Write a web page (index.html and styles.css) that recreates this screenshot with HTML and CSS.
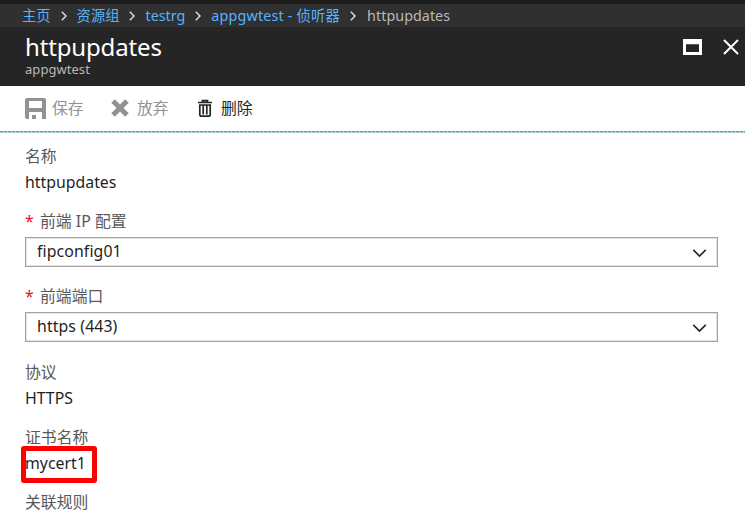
FILE: index.html
```
<!DOCTYPE html>
<html lang="zh-CN">
<head>
<meta charset="utf-8">
<title>httpupdates</title>
<link rel="stylesheet" href="styles.css">
</head>
<body>
<nav class="crumbs">
  <a class="crumb home">主页</a>
  <svg class="sep" viewBox="0 0 6 10"><path d="M.8 .8 5 5 .8 9.2"/></svg>
  <a class="crumb groups">资源组</a>
  <svg class="sep" viewBox="0 0 6 10"><path d="M.8 .8 5 5 .8 9.2"/></svg>
  <a class="crumb group">testrg</a>
  <svg class="sep" viewBox="0 0 6 10"><path d="M.8 .8 5 5 .8 9.2"/></svg>
  <a class="crumb gateway">appgwtest - 侦听器</a>
  <svg class="sep" viewBox="0 0 6 10"><path d="M.8 .8 5 5 .8 9.2"/></svg>
  <span class="crumb current">httpupdates</span>
</nav>
<header class="header">
  <div class="titles">
    <h1 class="title">httpupdates</h1>
    <div class="subtitle">appgwtest</div>
  </div>
  <div class="window-tools">
    <svg class="maximize" viewBox="0 0 19 16"><path fill-rule="evenodd" d="M0 0H19V16H0ZM3 5.2V13H16V5.2Z"/></svg>
    <svg class="close" viewBox="0 0 16 16"><path d="M1 1 15 15M15 1 1 15"/></svg>
  </div>
</header>
<div class="toolbar">
  <div class="command save">
    <svg class="icon" viewBox="0 0 21 21"><path fill-rule="evenodd" d="M2 0H19Q21 0 21 2V21H17V14H4V21H2Q0 21 0 19V2Q0 0 2 0ZM4 3V10H17V3Z"/><path d="M7 17H11V21H7Z"/></svg>
    <span>保存</span>
  </div>
  <div class="command discard">
    <svg class="icon" viewBox="0 0 18 18"><path d="M2 2 16 16M16 2 2 16"/></svg>
    <span>放弃</span>
  </div>
  <div class="command delete">
    <svg class="icon" viewBox="0 0 14 17"><path d="M4.5 1.8V.7H9.5V1.8M0 2.5H14"/><path d="M1.8 5V14.5Q1.8 16.2 3.5 16.2H10.5Q12.2 16.2 12.2 14.5V5M5.2 5.5V14.5M8.8 5.5V14.5M1 5H13"/></svg>
    <span>删除</span>
  </div>
</div>
<main class="form">
  <div class="field">
    <div class="label">名称</div>
    <div class="value name">httpupdates</div>
  </div>
  <div class="field">
    <div class="label"><span class="required">*</span>前端 IP 配置</div>
    <div class="select"><span class="config">fipconfig01</span><svg class="arrow" viewBox="0 0 16 9"><path d="M1 1 8 8 15 1"/></svg></div>
  </div>
  <div class="field">
    <div class="label"><span class="required">*</span>前端端口</div>
    <div class="select port-select"><span class="port">https (443)</span><svg class="arrow" viewBox="0 0 16 9"><path d="M1 1 8 8 15 1"/></svg></div>
  </div>
  <div class="field">
    <div class="label">协议</div>
    <div class="value protocol">HTTPS</div>
  </div>
  <div class="field">
    <div class="label">证书名称</div>
    <div class="value marked">mycert1</div>
  </div>
  <div class="field">
    <div class="label">关联规则</div>
  </div>
</main>
</body>
</html>
```

FILE: styles.css
```
*, *::after { box-sizing: border-box; }
body {
  margin: 0;
  height: 514px;
  overflow: hidden;
  background: #fff;
  color: #1f1f1f;
  font: 15.85px/26px "Noto Sans", "Noto Sans CJK SC", sans-serif;
  white-space: nowrap;
}
svg { display: block; flex: none; overflow: visible; }
.crumbs {
  display: flex;
  align-items: center;
  height: 27px;
  padding-left: 22px;
  border-top: 4px solid #1b1b1b;
  background: #303030;
  font-size: 14.3px;
  line-height: 23px;
}
.crumb { color: #55b3ff; }
.gateway { letter-spacing: .2px; }
.current { color: #b9b9b9; letter-spacing: .05px; }
.sep { width: 6px; height: 10px; margin: 1px 10px 0 10px; fill: none; stroke: #e0e0e0; stroke-width: 1.4; }
.gateway + .sep { margin-right: 11px; }
.header {
  display: flex;
  justify-content: space-between;
  height: 59px;
  padding: 6px 6px 0 25px;
  background: #252525;
  color: #fff;
}
.title { margin: 0; font-size: 24px; font-weight: 400; line-height: 28px; letter-spacing: -.15px; }
.subtitle { font-size: 13px; line-height: 17px; color: #b9b9b9; letter-spacing: .05px; }
.window-tools { display: flex; gap: 21px; padding-top: 6px; }
.maximize { width: 19px; height: 16px; fill: #fff; }
.close { width: 16px; height: 16px; stroke: #fff; stroke-width: 2; }
.toolbar {
  display: flex;
  align-items: center;
  height: 47px;
  padding: 0 0 3px 25px;
  background-image:
    repeating-linear-gradient(90deg, #14aee8 0, #14aee8 3px, #c8eaf5 3px, #c8eaf5 4px),
    linear-gradient(#a9ccd5, #a9ccd5);
  background-position: 0 45px, 0 46px;
  background-size: 100% 1px;
  background-repeat: no-repeat;
}
.command { display: flex; align-items: center; color: #929292; }
.save { width: 86px; gap: 6px; }
.save .icon { width: 21px; height: 21px; fill: #929292; }
.discard { width: 87px; gap: 8px; }
.discard .icon { width: 18px; height: 18px; stroke: #929292; stroke-width: 5; }
.delete { gap: 9px; color: #1f1f1f; }
.delete .icon { width: 14px; height: 17px; fill: none; stroke: #252525; stroke-width: 1.7; }
.form { display: grid; gap: 13px; padding: 10px 27px 0 25px; }
.label { height: 26px; color: #595959; }
.value { height: 26px; }
.required { display: inline-block; width: 15px; color: #e81123; }
.select {
  display: flex;
  align-items: center;
  justify-content: space-between;
  height: 30px;
  margin: 3px 0;
  padding: 0 10px 2px 11px;
  border: 1px solid #a3a3a3;
  box-shadow: inset 0 0 0 1px #e4e4e4;
}
.port-select { margin-bottom: 4px; }
.config { letter-spacing: .1px; }
.port { letter-spacing: .1px; }
.arrow { width: 15px; height: 8px; margin-top: 3px; fill: none; stroke: #252525; stroke-width: 1.8; }
.marked { position: relative; width: 62px; }
.marked::after {
  content: "";
  position: absolute;
  left: -4px;
  top: -4px;
  width: 76px;
  height: 37px;
  border: 5px solid #f00;
  border-radius: 3px;
}
```
